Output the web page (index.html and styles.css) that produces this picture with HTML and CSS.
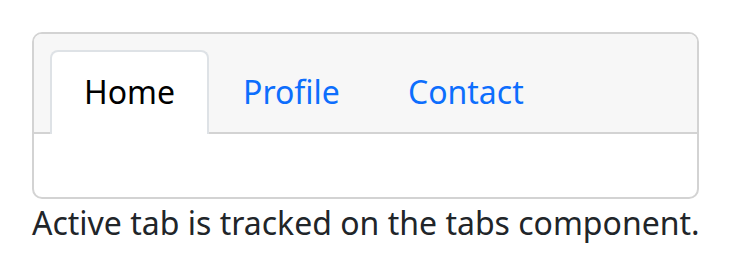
FILE: index.html
```html
<!DOCTYPE html>
<html>
<head>
<meta charset="utf-8">
<link rel="stylesheet" href="styles.css">
</head>
<body>
<div class="page">
  <div class="card">
    <div class="card-header">
      <ul class="tabs">
        <li class="tab active">Home</li>
        <li class="tab">Profile</li>
        <li class="tab">Contact</li>
      </ul>
    </div>
    <div class="card-body"></div>
  </div>
  <p class="note">Active tab is tracked on the tabs component.</p>
</div>
</body>
</html>
```
FILE: styles.css
```css
html, body {
  margin: 0;
  padding: 0;
  background: #ffffff;
}
body {
  font-family: "Noto Sans", "Open Sans", sans-serif;
  color: #212529;
}
.page {
  padding: 32px 0 0 32px;
  width: 667px;
}
.card {
  border: 2px solid #d3d3d3;
  border-radius: 10px;
  overflow: hidden;
}
.card-header {
  background: #f7f7f7;
  border-bottom: 2px solid #d3d3d3;
  padding: 16px 16px 0 16px;
}
.tabs {
  list-style: none;
  margin: 0 0 -2px 0;
  padding: 0;
  display: flex;
}
.tab {
  font-size: 32px;
  line-height: 46px;
  padding: 17px 32px 17px 32px;
  color: #0d6efd;
  border: 2px solid transparent;
  border-bottom: none;
  border-radius: 8px 8px 0 0;
}
.tab.active {
  color: #000000;
  background: #ffffff;
  border-color: #dee2e6;
  padding-bottom: 19px;
}
.card-body {
  height: 63px;
}
.note {
  margin: 0;
  font-size: 32px;
  line-height: 47px;
  white-space: nowrap;
}
```
